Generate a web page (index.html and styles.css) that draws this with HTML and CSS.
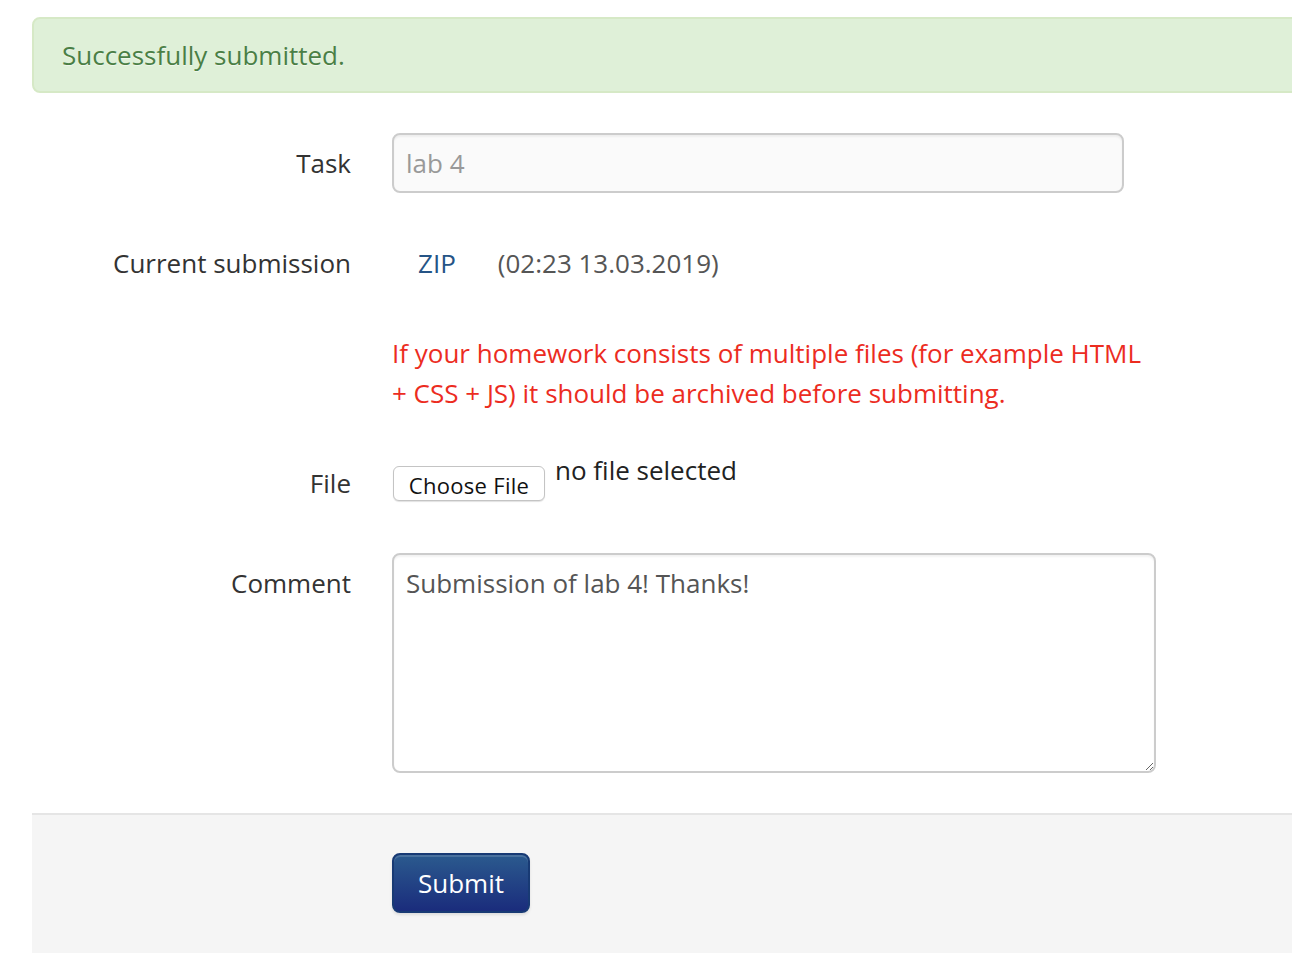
FILE: index.html
```html
<!DOCTYPE html>
<html>
<head>
<meta charset="utf-8">
<link rel="stylesheet" href="styles.css">
</head>
<body>
<div class="page">
  <div class="alert">Successfully submitted.</div>
  <form class="form">
    <div class="group">
      <div class="label">Task</div>
      <div class="controls">
        <div class="input disabled">lab 4</div>
      </div>
    </div>
    <div class="group">
      <div class="label">Current submission</div>
      <div class="controls text">
        <a class="link" href="#">ZIP</a><span class="date">(02:23 13.03.2019)</span>
      </div>
    </div>
    <div class="group">
      <div class="label"></div>
      <div class="controls text">
        <p class="warn">If your homework consists of multiple files (for example HTML + CSS + JS) it should be archived before submitting.</p>
      </div>
    </div>
    <div class="group file-group">
      <div class="label">File</div>
      <div class="controls file">
        <button type="button" class="choose">Choose File</button><span class="nofile">no file selected</span>
      </div>
    </div>
    <div class="group">
      <div class="label">Comment</div>
      <div class="controls">
        <textarea class="area">Submission of lab 4! Thanks!</textarea>
      </div>
    </div>
    <div class="actions">
      <button type="button" class="submit">Submit</button>
    </div>
  </form>
</div>
</body>
</html>
```

FILE: styles.css
```css
html, body {
  margin: 0;
  padding: 0;
  background: #fff;
  overflow: hidden;
}
body {
  font-family: "Open Sans", "Liberation Sans", sans-serif;
  font-size: 26px;
  line-height: 40px;
  color: #333;
}
.page {
  margin-left: 32px;
  padding-top: 17px;
  width: 1320px;
}
.alert {
  background: #dff0d8;
  border: 2px solid #d6e9c6;
  border-radius: 8px;
  color: #4a7f45;
  text-shadow: 0 1px 0 rgba(255,255,255,0.5);
  padding: 16px 70px 16px 28px;
  margin-bottom: 40px;
}
.form {
  margin: 0;
}
.group {
  display: flex;
  margin-bottom: 40px;
}
.label {
  width: 319px;
  flex: none;
  text-align: right;
  padding-top: 10px;
  line-height: 40px;
}
.controls {
  margin-left: 41px;
}
.controls.text {
  padding-top: 10px;
}
.input {
  box-sizing: border-box;
  width: 732px;
  height: 60px;
  border: 2px solid #ccc;
  border-radius: 8px;
  padding: 8px 12px;
  line-height: 40px;
  color: #999;
  background: #fafafa;
  box-shadow: inset 0 2px 2px rgba(0,0,0,0.05);
}
.link {
  color: #255486;
  text-decoration: none;
  margin-left: 26px;
}
.date {
  color: #555;
  margin-left: 42px;
}
.warn {
  margin: 0;
  width: 764px;
  color: #ec2c1f;
}
.file-group {
  height: 60px;
}
.file {
  display: flex;
  align-items: flex-start;
}
.choose {
  margin-top: 13px;
  margin-left: 1px;
  box-sizing: border-box;
  width: 152px;
  height: 35px;
  border: 1px solid #c4c4c4;
  border-radius: 6px;
  background: #fff;
  box-shadow: 0 1px 1px rgba(0,0,0,0.12);
  font-family: "Open Sans", "Liberation Sans", sans-serif;
  font-size: 22px;
  letter-spacing: 0.3px;
  color: #111;
  padding: 0;
  line-height: 36px;
}
.nofile {
  margin-left: 10px;
  line-height: 34px;
  color: #222;
}
.area {
  display: block;
  box-sizing: border-box;
  width: 764px;
  height: 220px;
  border: 2px solid #ccc;
  border-radius: 8px;
  padding: 8px 12px;
  font-family: "Open Sans", "Liberation Sans", sans-serif;
  font-size: 26px;
  line-height: 40px;
  color: #555;
  background: #fff;
  box-shadow: inset 0 2px 2px rgba(0,0,0,0.05);
  resize: vertical;
  margin: 0;
}
.actions {
  background: #f5f5f5;
  border-top: 2px solid #e5e5e5;
  padding: 38px 40px 40px 360px;
  margin-top: 40px;
}
.submit {
  display: block;
  box-sizing: border-box;
  width: 138px;
  height: 60px;
  border: 2px solid #183a74;
  border-radius: 8px;
  background: linear-gradient(to bottom, #2b5a8e, #1a2c7c);
  box-shadow: inset 0 2px 0 rgba(255,255,255,0.15), 0 2px 3px rgba(0,0,0,0.1);
  color: #fff;
  font-family: "Open Sans", "Liberation Sans", sans-serif;
  font-size: 26px;
  padding: 0;
  line-height: 54px;
}
```
